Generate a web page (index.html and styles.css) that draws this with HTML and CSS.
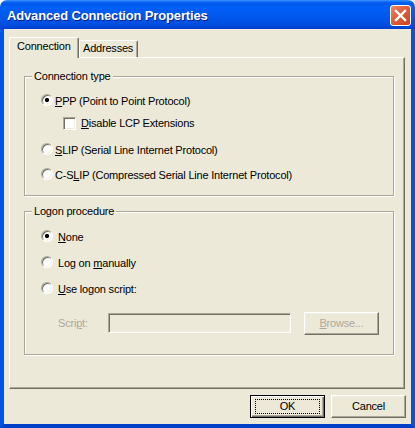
FILE: index.html
```html
<!DOCTYPE html>
<html>
<head>
<meta charset="utf-8">
<link rel="stylesheet" href="styles.css">
</head>
<body>
<div class="window">
  <div class="titlebar">
    <span class="title">Advanced Connection Properties</span>
    <button class="close" aria-label="Close">
      <svg width="21" height="21" viewBox="0 0 21 21"><path d="M6 6 L15 15 M15 6 L6 15" stroke="#fff" stroke-width="2.4" stroke-linecap="square" fill="none"/></svg>
    </button>
  </div>
  <div class="client">
    <div class="tabs">
      <div class="tab active">Connection</div>
      <div class="tab">Addresses</div>
    </div>
    <div class="panel">
      <div class="group g1">
        <div class="group-title">Connection type</div>
        <div class="opt r-ppp"><span class="radio checked"></span><span class="lbl"><u>P</u>PP (Point to Point Protocol)</span></div>
        <div class="opt r-lcp"><span class="check"></span><span class="lbl"><u>D</u>isable LCP Extensions</span></div>
        <div class="opt r-slip"><span class="radio"></span><span class="lbl"><u>S</u>LIP (Serial Line Internet Protocol)</span></div>
        <div class="opt r-cslip"><span class="radio"></span><span class="lbl">C-S<u>L</u>IP (Compressed Serial Line Internet Protocol)</span></div>
      </div>
      <div class="group g2">
        <div class="group-title">Logon procedure</div>
        <div class="opt r-none"><span class="radio checked"></span><span class="lbl wide"><u>N</u>one</span></div>
        <div class="opt r-man"><span class="radio"></span><span class="lbl wide">Log on <u>m</u>anually</span></div>
        <div class="opt r-use"><span class="radio"></span><span class="lbl wide"><u>U</u>se logon script:</span></div>
        <div class="script-row">
          <span class="script-lbl">Scri<u>p</u>t:</span>
          <span class="edit"></span>
          <button class="btn disabled"><u>B</u>rowse...</button>
        </div>
      </div>
    </div>
    <div class="buttons">
      <button class="btn default"><span class="focus">OK</span></button>
      <button class="btn">Cancel</button>
    </div>
  </div>
</div>
</body>
</html>
```
FILE: styles.css
```css
html, body {
  margin: 0;
  padding: 0;
  background: #ffffff;
}
.window {
  width: 415px;
  height: 428px;
  display: flex;
  flex-direction: column;
  font-family: "Liberation Sans", Arial, sans-serif;
  font-size: 11px;
  line-height: 13px;
  letter-spacing: -0.2px;
  color: #000;
  border-radius: 7px 7px 0 0;
  overflow: hidden;
}
.titlebar {
  height: 29px;
  flex: none;
  display: flex;
  align-items: center;
  padding-left: 7px;
  background: linear-gradient(to bottom, #3d95ff 0, #0a66f7 2px, #0058ee 4px, #0060f8 8px, #005cf2 12px, #0056ea 18px, #004fe0 24px, #0047d6 27px, #003dcc 29px);
  box-sizing: border-box;
}
.title {
  font-family: "Liberation Sans", Arial, sans-serif;
  font-weight: bold;
  font-size: 13px;
  letter-spacing: -0.15px;
  color: #fff;
  text-shadow: 1px 1px 0 #0a1f8a;
  margin-top: 2px;
}
.close {
  margin-left: auto;
  margin-right: 4px;
  width: 21px;
  height: 21px;
  padding: 0;
  border: 1px solid #fff;
  border-radius: 3px;
  background: linear-gradient(135deg, #f0866a 0%, #e0603f 40%, #cc4520 100%);
  display: flex;
  align-items: center;
  justify-content: center;
  box-sizing: border-box;
  margin-top: 2px;
}
.close svg {
  display: block;
  margin: -1px;
}
.client {
  flex: 1;
  background: #ece9d8;
  border-left: 4px solid #0055e5;
  border-right: 4px solid #0055e5;
  border-bottom: 4px solid #0040c8;
  padding: 8px 5px 0 5px;
  display: flex;
  flex-direction: column;
}
.tabs {
  display: flex;
  align-items: flex-end;
  height: 20px;
}
.tab {
  box-sizing: border-box;
  border-top: 1px solid #fff;
  border-left: 1px solid #fff;
  border-right: 1px solid #716f64;
  box-shadow: inset -1px 0 0 #aca899;
  border-radius: 2px 2px 0 0;
  background: #ece9d8;
  height: 17px;
  width: 59px;
  padding: 1px 0 0 3px;
}
.tab.active {
  position: relative;
  z-index: 1;
  width: 70px;
  height: 21px;
  margin-bottom: -1px;
  padding: 2px 0 0 7px;
}
.panel {
  width: 396px;
  height: 332px;
  box-sizing: border-box;
  border-top: 1px solid #fff;
  border-left: 1px solid #fff;
  border-right: 1px solid #716f64;
  border-bottom: 1px solid #716f64;
  box-shadow: inset -1px -1px 0 #aca899;
  padding: 18px 0 0 14px;
  display: flex;
  flex-direction: column;
}
.group {
  width: 370px;
  box-sizing: border-box;
  border: 1px solid #aca899;
  box-shadow: inset 1px 1px 0 #fff, 1px 1px 0 #fff;
  display: flex;
  flex-direction: column;
  align-items: flex-start;
  padding-left: 16px;
}
.g1 { height: 120px; }
.g2 { height: 144px; margin-top: 15px; }
.group-title {
  background: #ece9d8;
  padding: 0 2px;
  margin: -7px 0 0 -9px;
  height: 13px;
}
.opt {
  display: flex;
  align-items: flex-start;
  height: 13px;
  white-space: nowrap;
}
.r-ppp { margin-top: 12px; }
.r-lcp { margin-top: 9px; margin-left: 22px; }
.r-slip { margin-top: 14px; }
.r-cslip { margin-top: 12px; }
.r-none { margin-top: 13px; }
.r-man { margin-top: 13px; }
.r-use { margin-top: 13px; }
.radio {
  flex: none;
  width: 12px;
  height: 12px;
  box-sizing: border-box;
  border-radius: 50%;
  border: 1px solid;
  border-color: #aca899 #fff #fff #aca899;
  box-shadow: inset 1px 1px 0 #716f64, inset -1px -1px 0 #f1efe2;
  background: #fff;
  margin-top: -1px;
}
.radio.checked {
  background: radial-gradient(circle, #000 0, #000 1.8px, #fff 2.4px);
}
.check {
  flex: none;
  width: 13px;
  height: 13px;
  box-sizing: border-box;
  border: 1px solid;
  border-color: #aca899 #fff #fff #aca899;
  box-shadow: inset 1px 1px 0 #716f64, inset -1px -1px 0 #f1efe2;
  background: #fff;
}
.lbl { margin-left: 2px; }
.check + .lbl { margin-left: 5px; }
.lbl.wide { margin-left: 5px; }
u { text-decoration: underline; text-underline-offset: 1px; }
.script-row {
  display: flex;
  align-items: flex-start;
  margin-top: 16px;
  margin-left: 17px;
}
.script-lbl {
  width: 50px;
  margin-top: 5px;
  color: #aca899;
}
.edit {
  width: 183px;
  height: 20px;
  margin-top: 1px;
  box-sizing: border-box;
  border: 1px solid;
  border-color: #aca899 #fff #fff #aca899;
  box-shadow: inset 1px 1px 0 #716f64, inset -1px -1px 0 #f1efe2;
  background: #ece9d8;
}
.btn {
  width: 75px;
  height: 23px;
  box-sizing: border-box;
  padding: 0;
  font: inherit;
  letter-spacing: inherit;
  color: #000;
  background: #ece9d8;
  border: 1px solid;
  border-color: #fff #716f64 #716f64 #fff;
  box-shadow: inset -1px -1px 0 #aca899, inset 1px 1px 0 #f1efe2;
  display: flex;
  align-items: center;
  justify-content: center;
}
.btn.disabled {
  color: #aca899;
  margin-left: 13px;
}
.buttons {
  display: flex;
  justify-content: flex-end;
  gap: 6px;
  margin-top: 6px;
}
.btn.default {
  border: 1px solid #000;
  box-shadow: inset 1px 1px 0 #fff, inset -1px -1px 0 #716f64, inset -2px -2px 0 #aca899;
}
.focus {
  display: flex;
  align-items: center;
  justify-content: center;
  width: 65px;
  height: 15px;
  box-sizing: border-box;
  border: 1px dotted #000;
}
```
